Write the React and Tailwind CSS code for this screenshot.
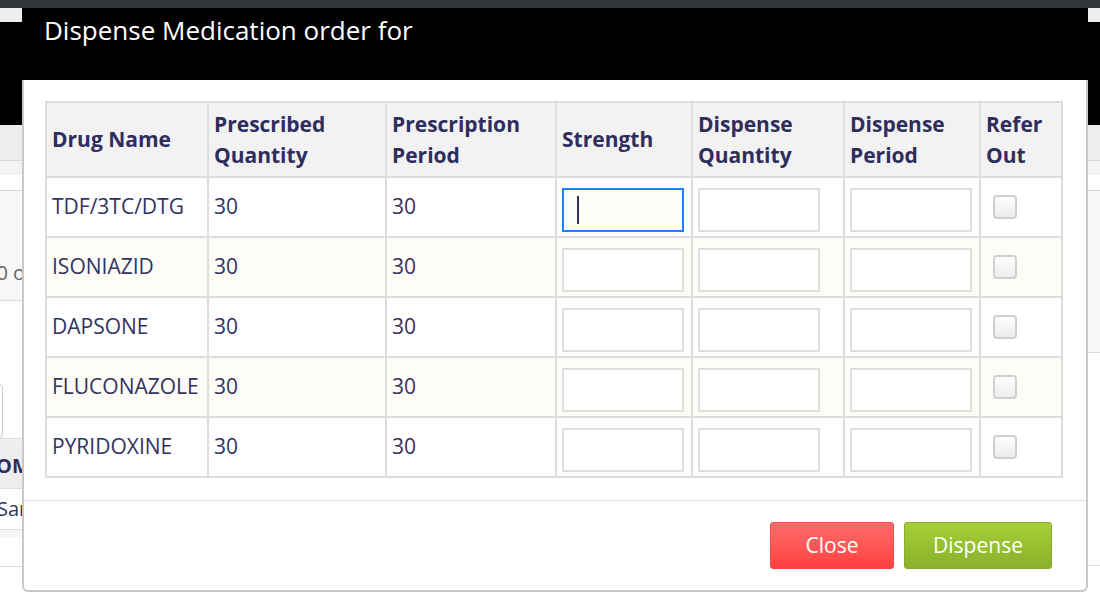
import React from 'react';

const drugs = ['TDF/3TC/DTG', 'ISONIAZID', 'DAPSONE', 'FLUCONAZOLE', 'PYRIDOXINE'];

const headers = [
  ['Drug Name'],
  ['Prescribed', 'Quantity'],
  ['Prescription', 'Period'],
  ['Strength'],
  ['Dispense', 'Quantity'],
  ['Dispense', 'Period'],
  ['Refer', 'Out'],
];

function Field({ focused }) {
  if (focused) {
    return (
      <div className="mt-[6px] w-[122px] h-[44px] border-2 border-[#1a80fb] bg-[#fdfcf6] flex items-center pl-[13px]">
        <span className="w-[2px] h-[28px] bg-[#2e2d5e]" />
      </div>
    );
  }
  return (
    <input
      type="text"
      className="mt-[6px] w-[122px] h-[44px] border-2 border-[#dedede] bg-white outline-none"
    />
  );
}

function Cell({ children, className = '', stripe }) {
  return (
    <div
      className={
        'border-r-2 border-b-2 border-[#dddddd] flex items-center pl-[5px] ' +
        (stripe ? 'bg-[#fdfcf7] ' : 'bg-white ') +
        className
      }
    >
      {children}
    </div>
  );
}

function Backdrop() {
  return (
    <div className="w-full h-full flex flex-col">
      <div className="h-[8px] bg-[#33363a]" />
      <div className="h-[14px] bg-[#eeeeee]" />
      <div className="h-[103px] bg-black" />
      <div className="h-[36px] bg-[#eeeeee] border-b border-[#d8d8d8]" />
      <div className="h-[14px] bg-[#f3f3f3]" />
      <div className="h-[16px] bg-white border-b border-[#d4d4d4]" />
      <div className="flex flex-1">
        <div className="w-1/2 flex flex-col">
          <div className="h-[110px] bg-[#f7f7f7] border-b border-[#dcdcdc] pt-[70px]">
            <span className="block -ml-[15px] text-[20px] leading-[24px] text-[#666]">10 of</span>
          </div>
          <div className="h-[83px] bg-white" />
          <div className="h-[54px] bg-white">
            <div className="-ml-[20px] w-[23px] h-full border border-[#cccccc] rounded-[4px]" />
          </div>
          <div className="h-[5px] bg-[#f0f0f0] border-t border-[#dddddd]" />
          <div className="h-[46px] bg-[#eeeeee] border-b border-[#dddddd] flex items-center">
            <span className="-ml-[4px] text-[20px] font-bold text-[#2e2d5e]">OM</span>
          </div>
          <div className="h-[41px] bg-white border-b border-[#dddddd] flex items-center">
            <span className="-ml-[3px] text-[20px] text-[#33325f]">Sar</span>
          </div>
          <div className="h-[7px] bg-[#f5f5f5]" />
          <div className="h-[30px] bg-white border-b border-[#dddddd]" />
        </div>
        <div className="w-1/2 flex flex-col">
          <div className="h-[162px] bg-[#f7f7f7] border-b border-[#dcdcdc]" />
          <div className="h-[213px] bg-white border-b border-[#dddddd]" />
        </div>
      </div>
    </div>
  );
}

export default function App() {
  return (
    <div className="relative w-[1100px] h-[600px] overflow-hidden bg-white font-['Open_Sans',sans-serif]">
      <Backdrop />

      <div className="absolute left-[22px] top-[8px] w-[1066px] h-[584px] flex flex-col">
        <div className="h-[72px] bg-black pl-[22px] pt-[5px]">
          <h2 className="text-[26px] leading-[34px] text-white">Dispense Medication order for</h2>
        </div>

        <div className="flex-1 bg-white border-x-2 border-b-2 border-[#c9c9c9] rounded-b-[6px] flex flex-col">
          <div className="pt-[21px] pl-[21px]">
            <div className="grid grid-cols-[162px_178px_170px_136px_152px_136px_82px] w-[1018px] border-l-2 border-t-2 border-[#dddddd] text-[21px]">
              {headers.map((h, i) => (
                <div
                  key={i}
                  className="h-[75px] border-r-2 border-b-2 border-[#dddddd] bg-[#f2f2f2] flex items-center pl-[5px]"
                >
                  <div className="font-bold leading-[31px] text-[#2e2d5e]">
                    {h.map((line) => (
                      <div key={line}>{line}</div>
                    ))}
                  </div>
                </div>
              ))}

              {drugs.map((drug, r) => {
                const stripe = r % 2 === 1;
                return (
                  <React.Fragment key={drug}>
                    <Cell stripe={stripe} className="h-[60px] whitespace-nowrap text-[#33325f]">{drug}</Cell>
                    <Cell stripe={stripe} className="text-[#33325f]">30</Cell>
                    <Cell stripe={stripe} className="text-[#33325f]">30</Cell>
                    <Cell stripe={stripe}>
                      <Field focused={r === 0} />
                    </Cell>
                    <Cell stripe={stripe}>
                      <Field />
                    </Cell>
                    <Cell stripe={stripe}>
                      <Field />
                    </Cell>
                    <Cell stripe={stripe} className="pl-[12px]">
                      <div className="w-[24px] h-[24px] rounded-[4px] border-2 border-[#cfd1d1] bg-gradient-to-b from-white to-[#ececec]" />
                    </Cell>
                  </React.Fragment>
                );
              })}
            </div>
          </div>

          <div className="mt-[22px] border-t border-[#e3e3e3] pt-[21px] pr-[34px] flex justify-end gap-[10px]">
            <button className="w-[124px] h-[47px] rounded-[3px] border border-[#ec4b4b] bg-gradient-to-b from-[#ff6b6b] to-[#ff3f3f] text-white text-[21px]">
              Close
            </button>
            <button className="w-[148px] h-[47px] rounded-[3px] border border-[#86ad2b] bg-gradient-to-b from-[#a6cf38] to-[#89b12a] text-white text-[21px]">
              Dispense
            </button>
          </div>
        </div>
      </div>
    </div>
  );
}
